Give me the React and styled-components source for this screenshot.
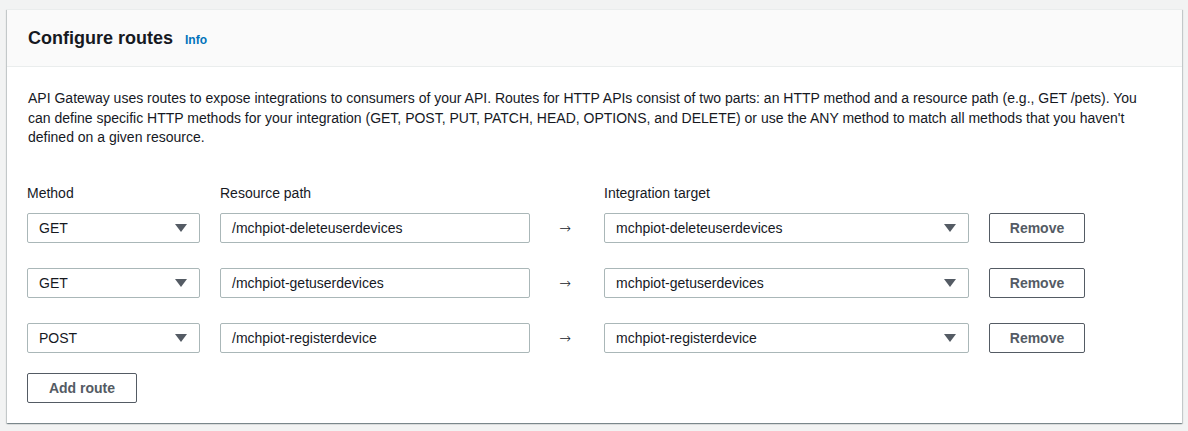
import React from "react";
import styled, { createGlobalStyle } from "styled-components";

const Global = createGlobalStyle`
  html, body { margin: 0; padding: 0; background: #f2f3f3; }
  body { font-family: "Liberation Sans", Arial, sans-serif; color: #16191f; }
  * { box-sizing: border-box; }
`;

const Page = styled.div`
  padding: 9px 6px 8px 7px;
`;

const Card = styled.section`
  background: #fff;
  border-top: 1px solid #eaeded;
  box-shadow: 0 1px 1px 0 rgba(0, 28, 36, 0.3), 1px 1px 1px 0 rgba(0, 28, 36, 0.15),
    -1px 1px 1px 0 rgba(0, 28, 36, 0.15);
`;

const Header = styled.header`
  background: #fafafa;
  border-bottom: 1px solid #eaeded;
  height: 57px;
  padding: 0 20px 0 21px;
  display: flex;
  align-items: center;
  gap: 12px;
`;

const Title = styled.h2`
  margin: 0;
  font-size: 18px;
  font-weight: 700;
  line-height: 22px;
`;

const InfoLink = styled.a`
  color: #0073bb;
  font-size: 12px;
  font-weight: 700;
  text-decoration: none;
  margin-top: 3px;
`;

const Body = styled.div`
  padding: 22px 20px 20px 21px;
`;

const Description = styled.p`
  margin: 0 0 35px 0;
  font-size: 14px;
  line-height: 19.5px;
`;

const Grid = styled.div`
  display: grid;
  grid-template-columns: 173px 310px 34px 365px 96px;
  column-gap: 20px;
  margin-left: -1px;
`;

const Label = styled.div`
  font-size: 14px;
  line-height: 20px;
  margin-bottom: 10px;
  grid-column: ${(p) => p.$col};
`;

const RowGap = styled.div`
  grid-column: 1 / -1;
  height: 25px;
`;

const Field = styled.div`
  height: 30px;
  border: 1px solid #aab7b8;
  border-radius: 2px;
  background: #fff;
  display: flex;
  align-items: center;
  padding: 0 12px 0 11px;
  font-size: 14px;
  color: #16191f;
`;

const FieldText = styled.span`
  flex: 1;
  white-space: nowrap;
`;

const Caret = styled.span`
  width: 0;
  height: 0;
  border-left: 6px solid transparent;
  border-right: 6px solid transparent;
  border-top: 8px solid #545b64;
`;

const Arrow = styled.div`
  display: flex;
  align-items: center;
  justify-content: center;
  font-family: "DejaVu Sans", sans-serif;
  font-weight: 200;
  font-size: 14px;
  line-height: 1;
  color: #16191f;
  padding-right: 4px;
`;

const Button = styled.button`
  height: 30px;
  width: ${(p) => p.$w}px;
  border: 1px solid #545b64;
  border-radius: 2px;
  background: #fff;
  color: #545b64;
  font-family: inherit;
  font-size: 14px;
  font-weight: 700;
  padding: 0;
  cursor: pointer;
`;

const Footer = styled.div`
  margin-top: 20px;
  margin-left: -1px;
`;

const routes = [
  { method: "GET", path: "/mchpiot-deleteuserdevices", target: "mchpiot-deleteuserdevices" },
  { method: "GET", path: "/mchpiot-getuserdevices", target: "mchpiot-getuserdevices" },
  { method: "POST", path: "/mchpiot-registerdevice", target: "mchpiot-registerdevice" },
];

export default function App() {
  return (
    <>
      <Global />
      <Page>
        <Card>
          <Header>
            <Title>Configure routes</Title>
            <InfoLink href="#">Info</InfoLink>
          </Header>
          <Body>
            <Description>
              API Gateway uses routes to expose integrations to consumers of your API. Routes for HTTP APIs
              consist of two parts: an HTTP method and a resource path (e.g., GET /pets). You can define
              specific HTTP methods for your integration (GET, POST, PUT, PATCH, HEAD, OPTIONS, and DELETE)
              or use the ANY method to match all methods that you haven't defined on a given resource.
            </Description>
            <Grid>
              <Label $col="1">Method</Label>
              <Label $col="2">Resource path</Label>
              <Label $col="4 / span 2">Integration target</Label>
              {routes.map((r, i) => (
                <React.Fragment key={i}>
                  {i > 0 && <RowGap />}
                  <Field>
                    <FieldText>{r.method}</FieldText>
                    <Caret />
                  </Field>
                  <Field>
                    <FieldText>{r.path}</FieldText>
                  </Field>
                  <Arrow>→</Arrow>
                  <Field>
                    <FieldText>{r.target}</FieldText>
                    <Caret />
                  </Field>
                  <Button $w={96}>Remove</Button>
                </React.Fragment>
              ))}
            </Grid>
            <Footer>
              <Button $w={110}>Add route</Button>
            </Footer>
          </Body>
        </Card>
      </Page>
    </>
  );
}
